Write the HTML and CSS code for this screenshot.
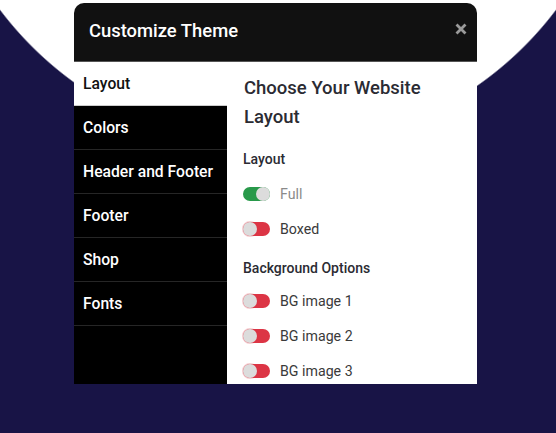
FILE: index.html
```html
<!DOCTYPE html>
<html lang="en">
<head>
    <meta charset="UTF-8">
    <meta name="viewport" content="width=device-width, initial-scale=1.0">
    <title>Customize Theme</title>
    <link rel="stylesheet" href="styles.css">
</head>
<body>
    <div class="panel">
        <div class="panel-header">
            <h1>Customize Theme</h1>
            <button class="close-btn" aria-label="Close">
                <svg width="12" height="12" viewBox="0 0 12 12">
                    <path d="M2.5 2.5 L9.5 9.5 M9.5 2.5 L2.5 9.5" stroke="#9a9a9a" stroke-width="2.8" stroke-linecap="square"/>
                </svg>
            </button>
        </div>
        <div class="panel-body">
            <ul class="side-menu">
                <li class="active">Layout</li>
                <li>Colors</li>
                <li>Header and Footer</li>
                <li>Footer</li>
                <li>Shop</li>
                <li>Fonts</li>
            </ul>
            <div class="content">
                <h2>Choose Your Website Layout</h2>
                <h3 class="first">Layout</h3>
                <label class="option muted"><span class="toggle on"></span>Full</label>
                <label class="option"><span class="toggle"></span>Boxed</label>
                <h3>Background Options</h3>
                <label class="option"><span class="toggle"></span>BG image 1</label>
                <label class="option"><span class="toggle"></span>BG image 2</label>
                <label class="option"><span class="toggle"></span>BG image 3</label>
            </div>
        </div>
    </div>
</body>
</html>
```

FILE: styles.css
```css
body {
    margin: 0;
    height: 100vh;
    font-family: Roboto, "Liberation Sans", sans-serif;
    background: radial-gradient(circle 349px at 278px -200px, #fff 99.6%, #181446 100%);
    background-color: #181446;
    overflow: hidden;
}

.panel {
    width: 403px;
    margin: 3px 0 0 74px;
    border-radius: 10px 10px 0 0;
    overflow: hidden;
}

.panel-header {
    height: 58px;
    background-color: #111;
    border-bottom: 1px solid #555;
    display: flex;
    align-items: center;
    justify-content: space-between;
    padding: 0 10px 0 15px;
}

.panel-header h1 {
    margin: 0 0 4px;
    color: #fff;
    font-size: 18.4px;
    font-weight: 500;
}

.close-btn {
    background: none;
    border: none;
    padding: 0;
    width: 12px;
    height: 12px;
    margin-bottom: 6px;
    cursor: pointer;
}

.close-btn svg {
    display: block;
}

.panel-body {
    height: 322px;
    display: flex;
    background-color: #fff;
    overflow: hidden;
}

.side-menu {
    width: 153px;
    margin: 0;
    padding: 0;
    list-style: none;
    background-color: #000;
}

.side-menu li {
    height: 43px;
    line-height: 43px;
    padding-left: 9px;
    color: #fff;
    font-size: 15.7px;
    font-weight: 500;
    border-bottom: 1px solid #262626;
}

.side-menu li.active {
    background-color: #fff;
    color: #111;
    border-bottom-color: #ccc;
}

.content {
    flex: 1;
    padding: 12px 16px 0 16px;
}

.content h2 {
    margin: 0 0 0 1px;
    font-size: 18.5px;
    font-weight: 500;
    line-height: 29px;
    color: #2b2b33;
}

.content h3 {
    margin: 12px 0 5px;
    font-size: 14px;
    font-weight: 500;
    line-height: 20px;
    color: #2b2b33;
}

.content h3.first {
    margin-top: 17px;
    margin-bottom: 7px;
}

.option {
    display: flex;
    align-items: center;
    height: 35px;
    font-size: 14.2px;
    color: #3a3a3a;
}

.option.muted {
    color: #8a8a8a;
}

.toggle {
    position: relative;
    width: 27px;
    height: 14px;
    border-radius: 7px;
    background-color: #dc3545;
    margin-right: 10px;
}

.toggle::after {
    content: "";
    position: absolute;
    top: 0;
    left: 0;
    width: 14px;
    height: 14px;
    border-radius: 50%;
    background-color: #dcdcdc;
    box-shadow: 0 0 0 1px rgba(220, 53, 69, 0.25);
}

.toggle.on {
    background-color: #28994a;
}

.toggle.on::after {
    left: auto;
    right: 0;
    box-shadow: none;
}
```
